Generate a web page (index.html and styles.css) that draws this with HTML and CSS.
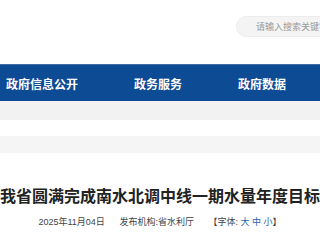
FILE: index.html
```html
<!DOCTYPE html>
<html>
<head>
<meta charset="UTF-8">
  <meta name="viewport" content="width=device-width, initial-scale=1.0">
  <title>我省圆满完成南水北调中线一期水量年度目标</title>
  <link rel="stylesheet" href="styles.css">
</head>
<body>
<div id="header">
  <div id="search_box">
    <input type="text" id="keyword" placeholder="请输入搜索关键字">
  </div>
</div>
<div id="nav">
  <a href="#">政府信息公开</a>
  <a href="#">政务服务</a>
  <a href="#">政府数据</a>
</div>
<div class="strip"></div>
<div class="gap"></div>
<div class="strip strip2"></div>
<div id="article">
  <h1 class="title">我省圆满完成南水北调中线一期水量年度目标</h1>
  <p class="meta">
    <span>2025年11月04日</span>
    <span class="org">发布机构:省水利厅</span>
    <span class="fontsize">【字体: <a href="#">大</a> <a href="#">中</a> <a href="#">小</a>】</span>
  </p>
</div>
</body>
</html>
```

FILE: styles.css
```css
/* 页面基础 */
body {
  margin: 0;
  padding: 0;
  font-family: "Liberation Sans", "Noto Sans CJK SC", sans-serif;
  color: #333;
  background: #fff;
  overflow: hidden;
}

#header {
  height: 64px;
  display: flex;
  justify-content: flex-end;
  align-items: flex-start;
  padding-top: 16px;
  box-sizing: border-box;
}

#search_box {
  width: 96px;
  height: 21px;
  margin-right: -12px;
  background: #f4f4f4;
  border: solid 1px #ececec;
  border-radius: 11px 0 0 11px;
  box-sizing: border-box;
  display: flex;
  align-items: center;
  padding-left: 19px;
}

#keyword {
  width: 100%;
  border: none;
  background: transparent;
  outline: none;
  padding: 0;
  font-size: 9px;
  font-family: "Liberation Sans", "Noto Sans CJK SC", sans-serif;
  color: #999;
}

#keyword::placeholder {
  color: #9a9a9a;
}

#nav {
  height: 37px;
  background-color: #0d4b95;
  border-top: solid 1px #3f6eab;
  box-sizing: border-box;
  display: flex;
  align-items: center;
  gap: 56px;
  padding-left: 6px;
}

#nav a {
  color: #fff;
  text-decoration: none;
  font-size: 12px;
  font-weight: bold;
  font-family: "Noto Sans CJK SC", sans-serif;
  white-space: nowrap;
}

.strip {
  height: 19px;
  background: #f2f2f2;
}

.gap {
  height: 16px;
}

.strip2 {
  height: 17px;
  background: #f5f5f5;
}

#article {
  padding-top: 32px;
}

.title {
  margin: 0;
  display: flex;
  justify-content: center;
  white-space: nowrap;
  font-size: 16px;
  line-height: 20px;
  font-weight: bold;
  color: #222;
  font-family: "Noto Sans CJK SC", sans-serif;
}

.meta {
  margin: 11px 0 0;
  text-align: center;
  font-size: 9px;
  line-height: 12px;
  color: #444;
  white-space: nowrap;
}

.meta .org {
  margin-left: 12px;
}

.meta .fontsize {
  margin-left: 12px;
}

.meta a {
  color: #2a63ad;
  text-decoration: none;
}
```
